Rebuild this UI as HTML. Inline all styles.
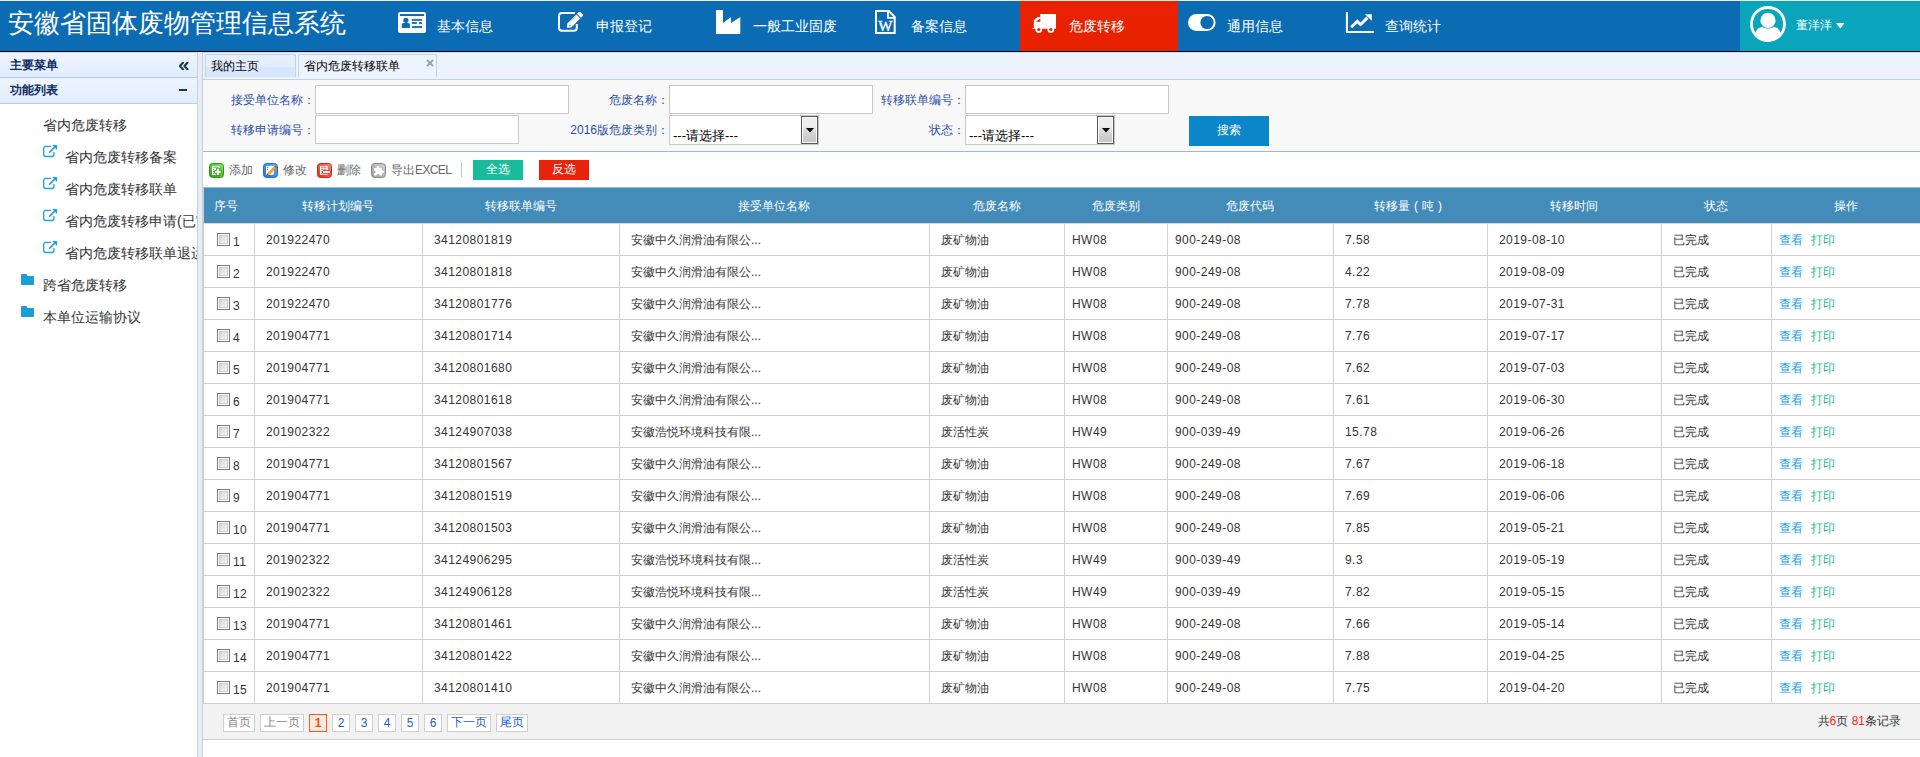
<!DOCTYPE html>
<html><head><meta charset="utf-8"><title>安徽省固体废物管理信息系统</title><style>
*{margin:0;padding:0}
html,body{width:1920px;height:757px;overflow:hidden;background:#fff;font-family:"Liberation Sans",sans-serif;position:relative}
.t{position:absolute;white-space:nowrap}
.b{position:absolute;display:block}
.cb{position:absolute;width:13px;height:13px;box-sizing:border-box;border:1px solid #7a7a7a;background:#fff}
.cb:after{content:"";position:absolute;left:1px;top:1px;width:9px;height:9px;box-sizing:border-box;border:1px solid #c8ccd3;background:linear-gradient(135deg,#d0d4db,#f7f7f7)}
</style></head><body>
<div class="b" style="left:0px;top:0px;width:1920px;height:1px;background:#f3ede9"></div>
<div class="b" style="left:0px;top:1px;width:1920px;height:50px;background:#0c6cb3"></div>
<div class="b" style="left:0px;top:51px;width:1920px;height:1px;background:#000"></div>
<div class="b" style="left:1020px;top:1px;width:158px;height:50px;background:#e82100"></div>
<div class="b" style="left:1740px;top:1px;width:180px;height:50px;background:#0aa4bd"></div>
<div class="t " style="left:8px;top:10px;font-size:26px;line-height:26px;color:#fff;">安徽省固体废物管理信息系统</div>
<div class="t " style="left:437px;top:19px;font-size:14px;line-height:14px;color:#fff;">基本信息</div>
<div class="t " style="left:596px;top:19px;font-size:14px;line-height:14px;color:#fff;">申报登记</div>
<div class="t " style="left:753px;top:19px;font-size:14px;line-height:14px;color:#fff;">一般工业固废</div>
<div class="t " style="left:911px;top:19px;font-size:14px;line-height:14px;color:#fff;">备案信息</div>
<div class="t " style="left:1069px;top:19px;font-size:14px;line-height:14px;color:#fff;">危废转移</div>
<div class="t " style="left:1227px;top:19px;font-size:14px;line-height:14px;color:#fff;">通用信息</div>
<div class="t " style="left:1385px;top:19px;font-size:14px;line-height:14px;color:#fff;">查询统计</div>
<svg class="b" style="left:398px;top:12px" width="28" height="21" viewBox="0 0 28 21">
<rect x="0" y="0" width="28" height="21" rx="2" fill="#fff"/>
<rect x="2" y="2" width="24" height="2" fill="#0c6cb3"/>
<circle cx="7.9" cy="8.3" r="2.6" fill="#0c6cb3"/>
<path d="M3.8 16 V12.6 Q3.8 11 5.4 11 H10.3 Q11.9 11 11.9 12.6 V16 Z" fill="#0c6cb3"/>
<rect x="13.8" y="7.1" width="10.2" height="1.7" fill="#0c6cb3"/>
<rect x="13.8" y="10.1" width="5" height="1.8" fill="#0c6cb3"/>
<rect x="20.9" y="10.1" width="3.1" height="1.8" fill="#0c6cb3"/>
<rect x="13.8" y="14.1" width="10.2" height="1.8" fill="#0c6cb3"/>
</svg>
<svg class="b" style="left:558px;top:12px" width="25" height="20" viewBox="0 0 25 20">
<path d="M16.8 1 H4 Q1 1 1 4 V15.8 Q1 18.8 4 18.8 H15.8 Q18.8 18.8 18.8 15.8 V11.9" fill="none" stroke="#fff" stroke-width="2"/>
<path d="M9 15.8 L9.28 11.56 L18.33 2.51 L22.29 6.47 L13.24 15.52 Z" fill="#fff"/>
<path d="M19.04 1.8 L21.02 -0.18 Q21.7 -0.6 22.4 0 L24.98 2.58 Q25.4 3.2 24.98 3.78 L23 5.76 Z" fill="#fff"/>
<path d="M11.6 13.2 L12.3 13.9" stroke="#0c6cb3" stroke-width="1.2"/>
<path d="M12.8 9.2 L17.5 4.5" stroke="#0c6cb3" stroke-width="0.6" opacity="0.6"/>
</svg>
<svg class="b" style="left:716px;top:10px" width="25" height="25" viewBox="0 0 25 25">
<path d="M0 0.8 Q0 0 0.8 0 H6.2 Q7 0 7 0.8 V13 L15 7 V13 L24.3 7 V24 H0 Z" fill="#fff"/>
</svg>
<svg class="b" style="left:875px;top:10px" width="22" height="25" viewBox="0 0 22 25">
<path d="M1 1 H13.8 L19.7 7 V23 H1 Z" fill="none" stroke="#fff" stroke-width="2"/>
<path d="M13 1 V7.8 H19.7" fill="none" stroke="#fff" stroke-width="1.8"/>
<text x="10.4" y="20.8" font-family="Liberation Serif" font-size="15" fill="#fff" text-anchor="middle" font-weight="normal" stroke="#fff" stroke-width="0.35">W</text>
</svg>
<svg class="b" style="left:1032px;top:13px" width="25" height="21" viewBox="0 0 25 21">
<path d="M8.3 1 H24 V15.7 H0.4 V14.9 H1.8 V7.3 L5.6 4 H8.3 Z" fill="#fff"/>
<path d="M3.7 8.7 L8.3 5.6 V8.7 Z" fill="#e82100"/>
<circle cx="6.8" cy="16.5" r="3.4" fill="#fff"/><circle cx="6.8" cy="16.5" r="1.6" fill="#e82100"/>
<circle cx="18.8" cy="16.5" r="3.4" fill="#fff"/><circle cx="18.8" cy="16.5" r="1.6" fill="#e82100"/>
</svg>
<svg class="b" style="left:1188px;top:14px" width="28" height="17" viewBox="0 0 28 17">
<rect x="0" y="0" width="27.6" height="17" rx="8.5" fill="#fff"/>
<circle cx="19" cy="8.5" r="6.6" fill="#0c6cb3"/>
</svg>
<svg class="b" style="left:1345px;top:12px" width="30" height="22" viewBox="0 0 30 22">
<path d="M1.9 0 V19.9 H28.8" fill="none" stroke="#fff" stroke-width="2"/>
<path d="M6.2 15.3 L12.3 9.3 L15.6 12.5 L22.5 5.6" fill="none" stroke="#fff" stroke-width="3"/>
<path d="M20 2.2 H26.8 V8.8 Z" fill="#fff"/>
</svg>
<svg class="b" style="left:1750px;top:6px" width="36" height="36" viewBox="0 0 36 36">
<defs><clipPath id="uc"><circle cx="18" cy="18" r="16"/></clipPath></defs>
<circle cx="18" cy="18" r="16.5" fill="none" stroke="#fff" stroke-width="2.8"/>
<g clip-path="url(#uc)"><path d="M5.2 36 V29 Q6 21.5 12 21 Q18 23.5 24 21 Q30 21.5 30.8 29 V36 Z" fill="#fff"/></g>
<circle cx="18" cy="14.4" r="8.2" fill="#0aa4bd"/>
<circle cx="18" cy="14.4" r="7.6" fill="#fff"/>
</svg>
<div class="t " style="left:1796px;top:19px;font-size:12px;line-height:12px;color:#fff;">董洋洋</div>
<svg class="b" style="left:1836px;top:23px" width="9" height="6" viewBox="0 0 9 6"><path d="M0 0 H8.5 L4.25 5.5 Z" fill="#fff"/></svg>
<div class="b" style="left:0px;top:52px;width:197px;height:25px;background:linear-gradient(#eff5ff,#e0ecff)"></div>
<div class="b" style="left:0px;top:52px;width:197px;height:1px;background:#c6daf4"></div>
<div class="b" style="left:0px;top:77px;width:197px;height:1px;background:#b4cdee"></div>
<div class="b" style="left:0px;top:78px;width:197px;height:25px;background:linear-gradient(#eff5ff,#e0ecff)"></div>
<div class="b" style="left:0px;top:103px;width:197px;height:1px;background:#b4cdee"></div>
<div class="b" style="left:197px;top:52px;width:1px;height:705px;background:#bcd2f0"></div>
<div class="b" style="left:198px;top:52px;width:4px;height:705px;background:#e9ecf1"></div>
<div class="t " style="left:10px;top:59px;font-size:12px;line-height:12px;color:#0e2d5f;font-weight:bold">主要菜单</div>
<div class="t " style="left:10px;top:84px;font-size:12px;line-height:12px;color:#0e2d5f;font-weight:bold">功能列表</div>
<svg class="b" style="left:179px;top:62px" width="10" height="8" viewBox="0 0 10 8"><path d="M4.5 0 L1 4 L4.5 8 M9 0 L5.5 4 L9 8" fill="none" stroke="#163c4c" stroke-width="2.2"/></svg>
<div class="b" style="left:179px;top:89px;width:8px;height:2px;background:#163c4c"></div>
<div class="t " style="left:43px;top:118px;font-size:14px;line-height:14px;color:#333;">省内危废转移</div>
<svg class="b" style="left:43px;top:145px" width="15" height="13" viewBox="0 0 15 13"><path d="M8 1.4 H2.6 Q0.7 1.4 0.7 3.3 V9.6 Q0.7 11.5 2.6 11.5 H9 Q10.9 11.5 10.9 9.6 V7" fill="none" stroke="#1e9fe0" stroke-width="1.3"/><path d="M6.2 7.6 L11.8 2" stroke="#1e9fe0" stroke-width="1.6"/><path d="M9.1 0 H14.1 V4.9 Z" fill="#1e9fe0"/></svg>
<div class="t " style="left:65px;top:150px;font-size:14px;line-height:14px;color:#333;white-space:nowrap;width:132px;overflow:hidden;height:16px">省内危废转移备案</div>
<svg class="b" style="left:43px;top:177px" width="15" height="13" viewBox="0 0 15 13"><path d="M8 1.4 H2.6 Q0.7 1.4 0.7 3.3 V9.6 Q0.7 11.5 2.6 11.5 H9 Q10.9 11.5 10.9 9.6 V7" fill="none" stroke="#1e9fe0" stroke-width="1.3"/><path d="M6.2 7.6 L11.8 2" stroke="#1e9fe0" stroke-width="1.6"/><path d="M9.1 0 H14.1 V4.9 Z" fill="#1e9fe0"/></svg>
<div class="t " style="left:65px;top:182px;font-size:14px;line-height:14px;color:#333;white-space:nowrap;width:132px;overflow:hidden;height:16px">省内危废转移联单</div>
<svg class="b" style="left:43px;top:209px" width="15" height="13" viewBox="0 0 15 13"><path d="M8 1.4 H2.6 Q0.7 1.4 0.7 3.3 V9.6 Q0.7 11.5 2.6 11.5 H9 Q10.9 11.5 10.9 9.6 V7" fill="none" stroke="#1e9fe0" stroke-width="1.3"/><path d="M6.2 7.6 L11.8 2" stroke="#1e9fe0" stroke-width="1.6"/><path d="M9.1 0 H14.1 V4.9 Z" fill="#1e9fe0"/></svg>
<div class="t " style="left:65px;top:214px;font-size:14px;line-height:14px;color:#333;white-space:nowrap;width:132px;overflow:hidden;height:16px">省内危废转移申请(已审核)</div>
<svg class="b" style="left:43px;top:241px" width="15" height="13" viewBox="0 0 15 13"><path d="M8 1.4 H2.6 Q0.7 1.4 0.7 3.3 V9.6 Q0.7 11.5 2.6 11.5 H9 Q10.9 11.5 10.9 9.6 V7" fill="none" stroke="#1e9fe0" stroke-width="1.3"/><path d="M6.2 7.6 L11.8 2" stroke="#1e9fe0" stroke-width="1.6"/><path d="M9.1 0 H14.1 V4.9 Z" fill="#1e9fe0"/></svg>
<div class="t " style="left:65px;top:246px;font-size:14px;line-height:14px;color:#333;white-space:nowrap;width:132px;overflow:hidden;height:16px">省内危废转移联单退运</div>
<svg class="b" style="left:21px;top:274px" width="13" height="11" viewBox="0 0 13 11"><path d="M0 1 Q0 0 1 0 H5.5 L6.5 2 H12 Q13 2 13 3 V10 Q13 11 12 11 H1 Q0 11 0 10 Z" fill="#1b9ede"/></svg>
<div class="t " style="left:43px;top:278px;font-size:14px;line-height:14px;color:#333;">跨省危废转移</div>
<svg class="b" style="left:21px;top:306px" width="13" height="11" viewBox="0 0 13 11"><path d="M0 1 Q0 0 1 0 H5.5 L6.5 2 H12 Q13 2 13 3 V10 Q13 11 12 11 H1 Q0 11 0 10 Z" fill="#1b9ede"/></svg>
<div class="t " style="left:43px;top:310px;font-size:14px;line-height:14px;color:#333;">本单位运输协议</div>
<div class="b" style="left:202px;top:52px;width:1px;height:705px;background:#bcd2f0"></div>
<div class="b" style="left:203px;top:52px;width:1717px;height:27px;background:#ecf3fd"></div>
<div class="b" style="left:203px;top:52px;width:1717px;height:1px;background:#c6daf4"></div>
<div class="b" style="left:203px;top:79px;width:1717px;height:1px;background:#bcd2f0"></div>
<div class="b" style="left:205px;top:54px;width:91px;height:23px;border:1px solid #bcd2f0;border-bottom:0;box-sizing:border-box;border-radius:2px 2px 0 0;background:linear-gradient(#e8f0fd 0,#e3ecfc 55%,#d7e6fb 56%,#d7e6fb 100%)"></div>
<div class="t " style="left:211px;top:60px;font-size:12px;line-height:12px;color:#000;">我的主页</div>
<div class="b" style="left:298px;top:54px;width:139px;height:23px;border:1px solid #bcd2f0;border-bottom:0;box-sizing:border-box;border-radius:2px 2px 0 0;background:#eef4fd"></div>
<div class="t " style="left:304px;top:60px;font-size:12px;line-height:12px;color:#000;">省内危废转移联单</div>
<svg class="b" style="left:426px;top:59px" width="8" height="8" viewBox="0 0 8 8"><path d="M1 1 L7 7 M7 1 L1 7" stroke="#8aa8a8" stroke-width="1.8"/></svg>
<div class="b" style="left:203px;top:80px;width:1717px;height:71px;background:#f8f8f8"></div>
<div class="b" style="left:203px;top:151px;width:1717px;height:1px;background:#95b8e7"></div>
<div class="t" style="left:115px;width:200px;text-align:right;top:94px;font-size:12px;line-height:12px;color:#2f4fa6">接受单位名称：</div>
<div class="t" style="left:115px;width:200px;text-align:right;top:124px;font-size:12px;line-height:12px;color:#2f4fa6">转移申请编号：</div>
<div class="t" style="left:469px;width:200px;text-align:right;top:94px;font-size:12px;line-height:12px;color:#2f4fa6">危废名称：</div>
<div class="t" style="left:469px;width:200px;text-align:right;top:124px;font-size:12px;line-height:12px;color:#2f4fa6">2016版危废类别：</div>
<div class="t" style="left:765px;width:200px;text-align:right;top:94px;font-size:12px;line-height:12px;color:#2f4fa6">转移联单编号：</div>
<div class="t" style="left:765px;width:200px;text-align:right;top:124px;font-size:12px;line-height:12px;color:#2f4fa6">状态：</div>
<div class="b" style="left:315px;top:85px;width:254px;height:29px;background:#fff;border:1px solid #c9c9c9;box-sizing:border-box"></div>
<div class="b" style="left:315px;top:115px;width:204px;height:29px;background:#fff;border:1px solid #c9c9c9;box-sizing:border-box"></div>
<div class="b" style="left:669px;top:85px;width:204px;height:29px;background:#fff;border:1px solid #c9c9c9;box-sizing:border-box"></div>
<div class="b" style="left:965px;top:85px;width:204px;height:29px;background:#fff;border:1px solid #c9c9c9;box-sizing:border-box"></div>
<div class="b" style="left:669px;top:115px;width:150px;height:30px;background:#fff;border:1px solid #c9c9c9;box-sizing:border-box"></div>
<div class="b" style="left:801px;top:116px;width:17px;height:28px;border:1px solid #5a5a5a;box-sizing:border-box;background:linear-gradient(#ececec,#f0f0f0 30%,#d6d6d6 60%,#c4c4c4);box-shadow:inset 0 0 0 1px #fafafa"></div>
<svg class="b" style="left:806px;top:128px" width="8" height="5" viewBox="0 0 8 5"><path d="M0 0 H8 L4 4.5 Z" fill="#000"/></svg>
<div class="t " style="left:673px;top:129px;font-size:13px;line-height:13px;color:#000;">---请选择---</div>
<div class="b" style="left:965px;top:115px;width:150px;height:30px;background:#fff;border:1px solid #c9c9c9;box-sizing:border-box"></div>
<div class="b" style="left:1097px;top:116px;width:17px;height:28px;border:1px solid #5a5a5a;box-sizing:border-box;background:linear-gradient(#ececec,#f0f0f0 30%,#d6d6d6 60%,#c4c4c4);box-shadow:inset 0 0 0 1px #fafafa"></div>
<svg class="b" style="left:1102px;top:128px" width="8" height="5" viewBox="0 0 8 5"><path d="M0 0 H8 L4 4.5 Z" fill="#000"/></svg>
<div class="t " style="left:969px;top:129px;font-size:13px;line-height:13px;color:#000;">---请选择---</div>
<div class="b" style="left:1189px;top:116px;width:80px;height:30px;background:#0b86c8"></div>
<div class="t " style="left:1189px;top:124px;font-size:12px;line-height:12px;color:#fff;width:80px;text-align:center">搜索</div>
<div class="b" style="left:203px;top:152px;width:1717px;height:35px;background:#fff"></div>
<div class="b" style="left:203px;top:187px;width:1717px;height:1px;background:#95b8e7"></div>
<svg class="b" style="left:209px;top:163px" width="15" height="15" viewBox="0 0 15 15"><defs><linearGradient id="gg" x1="1" y1="0" x2="0" y2="1"><stop offset="0" stop-color="#86e862"/><stop offset="1" stop-color="#2fa012"/></linearGradient></defs><rect x="0.5" y="0.5" width="14" height="14" rx="3" fill="url(#gg)" stroke="#2b9812"/><rect x="3" y="3" width="7.7" height="8.8" fill="#fff"/><path d="M4 4.3 H9.5 M4 6.4 H5 M4 8.4 H5 M4 10.4 H5" stroke="#777" stroke-width="0.8"/><path d="M7.6 5.2 H10.4 V7.6 H12.6 V10.4 H10.4 V12.6 H7.6 V10.4 H5.4 V7.6 H7.6 Z" fill="#fff" stroke="#2b9812" stroke-width="0.9"/></svg>
<svg class="b" style="left:263px;top:163px" width="15" height="15" viewBox="0 0 15 15"><defs><linearGradient id="gb" x1="1" y1="0" x2="0" y2="1"><stop offset="0" stop-color="#6ab4f8"/><stop offset="1" stop-color="#1f72d8"/></linearGradient></defs><rect x="0.5" y="0.5" width="14" height="14" rx="3" fill="url(#gb)" stroke="#1f6fd0"/><rect x="3" y="3" width="7.8" height="8.8" fill="#fff"/><path d="M4 4.3 H5.5 M4 6.4 H5" stroke="#666" stroke-width="0.8"/><path d="M10.2 12 H12" stroke="#666" stroke-width="0.6"/><path d="M12.3 2.8 L13.6 4.1 L6.3 11.4 L3.9 12.2 L4.7 9.9 Z" fill="#f3a90f" stroke="#d08000" stroke-width="0.5"/><path d="M12.3 2.4 L14.1 4.2 L13.1 5.2 L11.3 3.4 Z" fill="#e94040"/><path d="M3.9 12.2 L4.3 10.9 L5.2 11.8 Z" fill="#102040"/></svg>
<svg class="b" style="left:317px;top:163px" width="15" height="15" viewBox="0 0 15 15"><defs><linearGradient id="gr" x1="1" y1="0" x2="0" y2="1"><stop offset="0" stop-color="#fb8a70"/><stop offset="1" stop-color="#d8301e"/></linearGradient></defs><rect x="0.5" y="0.5" width="14" height="14" rx="3" fill="url(#gr)" stroke="#d0281a"/><rect x="3" y="3" width="7.8" height="8.8" fill="#fff"/><path d="M4 4.3 H9.5 M4 6.2 H9.5 M4 8.3 H5 M4 10.3 H5" stroke="#d0504a" stroke-width="0.8"/><rect x="5.5" y="7.6" width="7.8" height="3" rx="0.6" fill="#fff" stroke="#d0281a" stroke-width="0.9"/></svg>
<svg class="b" style="left:371px;top:163px" width="15" height="15" viewBox="0 0 15 15"><defs><linearGradient id="gy" x1="1" y1="0" x2="0" y2="1"><stop offset="0" stop-color="#d0d0d0"/><stop offset="1" stop-color="#a0a0a0"/></linearGradient></defs><rect x="0.5" y="0.5" width="14" height="14" rx="3" fill="url(#gy)" stroke="#8a8a8a"/><path d="M3 5 H5.6 Q5.2 3.2 7 3 Q8.8 3.2 8.4 5 H11 V7.4 Q12.9 7 13 8.9 Q12.9 10.7 11 10.3 V12.5 H8.4 Q8.8 10.9 7 11 Q5.2 10.9 5.6 12.5 H3 V10.3 Q4.6 10.6 4.6 9 Q4.6 7.4 3 7.7 Z" fill="#fff"/></svg>
<div class="t " style="left:229px;top:164px;font-size:12px;line-height:12px;color:#666;">添加</div>
<div class="t " style="left:283px;top:164px;font-size:12px;line-height:12px;color:#666;">修改</div>
<div class="t " style="left:337px;top:164px;font-size:12px;line-height:12px;color:#666;">删除</div>
<div class="t " style="left:391px;top:164px;font-size:12px;line-height:12px;color:#666;">导出<span style="letter-spacing:-0.6px">EXCEL</span></div>
<div class="b" style="left:461px;top:162px;width:1px;height:15px;background:#b8c8d8"></div>
<div class="b" style="left:473px;top:160px;width:50px;height:20px;background:#1abb9b"></div>
<div class="t " style="left:473px;top:163px;font-size:12px;line-height:12px;color:#fff;width:50px;text-align:center">全选</div>
<div class="b" style="left:539px;top:160px;width:50px;height:20px;background:#e8230c"></div>
<div class="t " style="left:539px;top:163px;font-size:12px;line-height:12px;color:#fff;width:50px;text-align:center">反选</div>
<div class="b" style="left:204px;top:188px;width:1716px;height:35px;background:#438cb9"></div>
<div class="b" style="left:203px;top:188px;width:1px;height:35px;background:#cfcfcf"></div>
<div class="b" style="left:203px;top:223px;width:1717px;height:1px;background:#d8d8d8"></div>
<div class="t " style="left:214px;top:200px;font-size:12px;line-height:12px;color:#fff;">序号</div>
<div class="t" style="left:254px;width:168px;text-align:center;top:200px;font-size:12px;line-height:12px;color:#fff">转移计划编号</div>
<div class="t" style="left:422px;width:197px;text-align:center;top:200px;font-size:12px;line-height:12px;color:#fff">转移联单编号</div>
<div class="t" style="left:619px;width:310px;text-align:center;top:200px;font-size:12px;line-height:12px;color:#fff">接受单位名称</div>
<div class="t" style="left:929px;width:135px;text-align:center;top:200px;font-size:12px;line-height:12px;color:#fff">危废名称</div>
<div class="t" style="left:1064px;width:103px;text-align:center;top:200px;font-size:12px;line-height:12px;color:#fff">危废类别</div>
<div class="t" style="left:1167px;width:166px;text-align:center;top:200px;font-size:12px;line-height:12px;color:#fff">危废代码</div>
<div class="t" style="left:1333px;width:154px;text-align:center;top:200px;font-size:12px;line-height:12px;color:#fff">转移量<span style="display:inline-block;width:12px;text-align:center">(</span>吨<span style="display:inline-block;width:12px;text-align:center">)</span></div>
<div class="t" style="left:1487px;width:174px;text-align:center;top:200px;font-size:12px;line-height:12px;color:#fff">转移时间</div>
<div class="t" style="left:1661px;width:110px;text-align:center;top:200px;font-size:12px;line-height:12px;color:#fff">状态</div>
<div class="t" style="left:1771px;width:149px;text-align:center;top:200px;font-size:12px;line-height:12px;color:#fff">操作</div>
<div class="b" style="left:203px;top:224px;width:1717px;height:480px;background:#fff"></div>
<div class="b" style="left:203px;top:223px;width:1px;height:481px;background:#cfcfcf"></div>
<div class="b" style="left:203px;top:255px;width:1717px;height:1px;background:#d0d0d0"></div>
<div class="cb" style="left:217px;top:233px"></div>
<div class="t " style="left:233px;top:236px;font-size:12px;line-height:12px;color:#333;letter-spacing:0.4px">1</div>
<div class="t " style="left:266px;top:234px;font-size:12px;line-height:12px;color:#333;letter-spacing:0.45px">201922470</div>
<div class="t " style="left:434px;top:234px;font-size:12px;line-height:12px;color:#333;letter-spacing:0.45px">34120801819</div>
<div class="t " style="left:631px;top:234px;font-size:12px;line-height:12px;color:#333;">安徽中久润滑油有限公...</div>
<div class="t " style="left:941px;top:234px;font-size:12px;line-height:12px;color:#333;">废矿物油</div>
<div class="t " style="left:1072px;top:234px;font-size:12px;line-height:12px;color:#333;letter-spacing:0.45px">HW08</div>
<div class="t " style="left:1175px;top:234px;font-size:12px;line-height:12px;color:#333;letter-spacing:0.45px">900-249-08</div>
<div class="t " style="left:1345px;top:234px;font-size:12px;line-height:12px;color:#333;letter-spacing:0.45px">7.58</div>
<div class="t " style="left:1499px;top:234px;font-size:12px;line-height:12px;color:#333;letter-spacing:0.45px">2019-08-10</div>
<div class="t " style="left:1673px;top:234px;font-size:12px;line-height:12px;color:#333;">已完成</div>
<div class="t " style="left:1779px;top:234px;font-size:12px;line-height:12px;color:#0d9fe6;">查看</div>
<div class="t " style="left:1811px;top:234px;font-size:12px;line-height:12px;color:#18bb95;">打印</div>
<div class="b" style="left:203px;top:287px;width:1717px;height:1px;background:#d0d0d0"></div>
<div class="cb" style="left:217px;top:265px"></div>
<div class="t " style="left:233px;top:268px;font-size:12px;line-height:12px;color:#333;letter-spacing:0.4px">2</div>
<div class="t " style="left:266px;top:266px;font-size:12px;line-height:12px;color:#333;letter-spacing:0.45px">201922470</div>
<div class="t " style="left:434px;top:266px;font-size:12px;line-height:12px;color:#333;letter-spacing:0.45px">34120801818</div>
<div class="t " style="left:631px;top:266px;font-size:12px;line-height:12px;color:#333;">安徽中久润滑油有限公...</div>
<div class="t " style="left:941px;top:266px;font-size:12px;line-height:12px;color:#333;">废矿物油</div>
<div class="t " style="left:1072px;top:266px;font-size:12px;line-height:12px;color:#333;letter-spacing:0.45px">HW08</div>
<div class="t " style="left:1175px;top:266px;font-size:12px;line-height:12px;color:#333;letter-spacing:0.45px">900-249-08</div>
<div class="t " style="left:1345px;top:266px;font-size:12px;line-height:12px;color:#333;letter-spacing:0.45px">4.22</div>
<div class="t " style="left:1499px;top:266px;font-size:12px;line-height:12px;color:#333;letter-spacing:0.45px">2019-08-09</div>
<div class="t " style="left:1673px;top:266px;font-size:12px;line-height:12px;color:#333;">已完成</div>
<div class="t " style="left:1779px;top:266px;font-size:12px;line-height:12px;color:#0d9fe6;">查看</div>
<div class="t " style="left:1811px;top:266px;font-size:12px;line-height:12px;color:#18bb95;">打印</div>
<div class="b" style="left:203px;top:319px;width:1717px;height:1px;background:#d0d0d0"></div>
<div class="cb" style="left:217px;top:297px"></div>
<div class="t " style="left:233px;top:300px;font-size:12px;line-height:12px;color:#333;letter-spacing:0.4px">3</div>
<div class="t " style="left:266px;top:298px;font-size:12px;line-height:12px;color:#333;letter-spacing:0.45px">201922470</div>
<div class="t " style="left:434px;top:298px;font-size:12px;line-height:12px;color:#333;letter-spacing:0.45px">34120801776</div>
<div class="t " style="left:631px;top:298px;font-size:12px;line-height:12px;color:#333;">安徽中久润滑油有限公...</div>
<div class="t " style="left:941px;top:298px;font-size:12px;line-height:12px;color:#333;">废矿物油</div>
<div class="t " style="left:1072px;top:298px;font-size:12px;line-height:12px;color:#333;letter-spacing:0.45px">HW08</div>
<div class="t " style="left:1175px;top:298px;font-size:12px;line-height:12px;color:#333;letter-spacing:0.45px">900-249-08</div>
<div class="t " style="left:1345px;top:298px;font-size:12px;line-height:12px;color:#333;letter-spacing:0.45px">7.78</div>
<div class="t " style="left:1499px;top:298px;font-size:12px;line-height:12px;color:#333;letter-spacing:0.45px">2019-07-31</div>
<div class="t " style="left:1673px;top:298px;font-size:12px;line-height:12px;color:#333;">已完成</div>
<div class="t " style="left:1779px;top:298px;font-size:12px;line-height:12px;color:#0d9fe6;">查看</div>
<div class="t " style="left:1811px;top:298px;font-size:12px;line-height:12px;color:#18bb95;">打印</div>
<div class="b" style="left:203px;top:351px;width:1717px;height:1px;background:#d0d0d0"></div>
<div class="cb" style="left:217px;top:329px"></div>
<div class="t " style="left:233px;top:332px;font-size:12px;line-height:12px;color:#333;letter-spacing:0.4px">4</div>
<div class="t " style="left:266px;top:330px;font-size:12px;line-height:12px;color:#333;letter-spacing:0.45px">201904771</div>
<div class="t " style="left:434px;top:330px;font-size:12px;line-height:12px;color:#333;letter-spacing:0.45px">34120801714</div>
<div class="t " style="left:631px;top:330px;font-size:12px;line-height:12px;color:#333;">安徽中久润滑油有限公...</div>
<div class="t " style="left:941px;top:330px;font-size:12px;line-height:12px;color:#333;">废矿物油</div>
<div class="t " style="left:1072px;top:330px;font-size:12px;line-height:12px;color:#333;letter-spacing:0.45px">HW08</div>
<div class="t " style="left:1175px;top:330px;font-size:12px;line-height:12px;color:#333;letter-spacing:0.45px">900-249-08</div>
<div class="t " style="left:1345px;top:330px;font-size:12px;line-height:12px;color:#333;letter-spacing:0.45px">7.76</div>
<div class="t " style="left:1499px;top:330px;font-size:12px;line-height:12px;color:#333;letter-spacing:0.45px">2019-07-17</div>
<div class="t " style="left:1673px;top:330px;font-size:12px;line-height:12px;color:#333;">已完成</div>
<div class="t " style="left:1779px;top:330px;font-size:12px;line-height:12px;color:#0d9fe6;">查看</div>
<div class="t " style="left:1811px;top:330px;font-size:12px;line-height:12px;color:#18bb95;">打印</div>
<div class="b" style="left:203px;top:383px;width:1717px;height:1px;background:#d0d0d0"></div>
<div class="cb" style="left:217px;top:361px"></div>
<div class="t " style="left:233px;top:364px;font-size:12px;line-height:12px;color:#333;letter-spacing:0.4px">5</div>
<div class="t " style="left:266px;top:362px;font-size:12px;line-height:12px;color:#333;letter-spacing:0.45px">201904771</div>
<div class="t " style="left:434px;top:362px;font-size:12px;line-height:12px;color:#333;letter-spacing:0.45px">34120801680</div>
<div class="t " style="left:631px;top:362px;font-size:12px;line-height:12px;color:#333;">安徽中久润滑油有限公...</div>
<div class="t " style="left:941px;top:362px;font-size:12px;line-height:12px;color:#333;">废矿物油</div>
<div class="t " style="left:1072px;top:362px;font-size:12px;line-height:12px;color:#333;letter-spacing:0.45px">HW08</div>
<div class="t " style="left:1175px;top:362px;font-size:12px;line-height:12px;color:#333;letter-spacing:0.45px">900-249-08</div>
<div class="t " style="left:1345px;top:362px;font-size:12px;line-height:12px;color:#333;letter-spacing:0.45px">7.62</div>
<div class="t " style="left:1499px;top:362px;font-size:12px;line-height:12px;color:#333;letter-spacing:0.45px">2019-07-03</div>
<div class="t " style="left:1673px;top:362px;font-size:12px;line-height:12px;color:#333;">已完成</div>
<div class="t " style="left:1779px;top:362px;font-size:12px;line-height:12px;color:#0d9fe6;">查看</div>
<div class="t " style="left:1811px;top:362px;font-size:12px;line-height:12px;color:#18bb95;">打印</div>
<div class="b" style="left:203px;top:415px;width:1717px;height:1px;background:#d0d0d0"></div>
<div class="cb" style="left:217px;top:393px"></div>
<div class="t " style="left:233px;top:396px;font-size:12px;line-height:12px;color:#333;letter-spacing:0.4px">6</div>
<div class="t " style="left:266px;top:394px;font-size:12px;line-height:12px;color:#333;letter-spacing:0.45px">201904771</div>
<div class="t " style="left:434px;top:394px;font-size:12px;line-height:12px;color:#333;letter-spacing:0.45px">34120801618</div>
<div class="t " style="left:631px;top:394px;font-size:12px;line-height:12px;color:#333;">安徽中久润滑油有限公...</div>
<div class="t " style="left:941px;top:394px;font-size:12px;line-height:12px;color:#333;">废矿物油</div>
<div class="t " style="left:1072px;top:394px;font-size:12px;line-height:12px;color:#333;letter-spacing:0.45px">HW08</div>
<div class="t " style="left:1175px;top:394px;font-size:12px;line-height:12px;color:#333;letter-spacing:0.45px">900-249-08</div>
<div class="t " style="left:1345px;top:394px;font-size:12px;line-height:12px;color:#333;letter-spacing:0.45px">7.61</div>
<div class="t " style="left:1499px;top:394px;font-size:12px;line-height:12px;color:#333;letter-spacing:0.45px">2019-06-30</div>
<div class="t " style="left:1673px;top:394px;font-size:12px;line-height:12px;color:#333;">已完成</div>
<div class="t " style="left:1779px;top:394px;font-size:12px;line-height:12px;color:#0d9fe6;">查看</div>
<div class="t " style="left:1811px;top:394px;font-size:12px;line-height:12px;color:#18bb95;">打印</div>
<div class="b" style="left:203px;top:447px;width:1717px;height:1px;background:#d0d0d0"></div>
<div class="cb" style="left:217px;top:425px"></div>
<div class="t " style="left:233px;top:428px;font-size:12px;line-height:12px;color:#333;letter-spacing:0.4px">7</div>
<div class="t " style="left:266px;top:426px;font-size:12px;line-height:12px;color:#333;letter-spacing:0.45px">201902322</div>
<div class="t " style="left:434px;top:426px;font-size:12px;line-height:12px;color:#333;letter-spacing:0.45px">34124907038</div>
<div class="t " style="left:631px;top:426px;font-size:12px;line-height:12px;color:#333;">安徽浩悦环境科技有限...</div>
<div class="t " style="left:941px;top:426px;font-size:12px;line-height:12px;color:#333;">废活性炭</div>
<div class="t " style="left:1072px;top:426px;font-size:12px;line-height:12px;color:#333;letter-spacing:0.45px">HW49</div>
<div class="t " style="left:1175px;top:426px;font-size:12px;line-height:12px;color:#333;letter-spacing:0.45px">900-039-49</div>
<div class="t " style="left:1345px;top:426px;font-size:12px;line-height:12px;color:#333;letter-spacing:0.45px">15.78</div>
<div class="t " style="left:1499px;top:426px;font-size:12px;line-height:12px;color:#333;letter-spacing:0.45px">2019-06-26</div>
<div class="t " style="left:1673px;top:426px;font-size:12px;line-height:12px;color:#333;">已完成</div>
<div class="t " style="left:1779px;top:426px;font-size:12px;line-height:12px;color:#0d9fe6;">查看</div>
<div class="t " style="left:1811px;top:426px;font-size:12px;line-height:12px;color:#18bb95;">打印</div>
<div class="b" style="left:203px;top:479px;width:1717px;height:1px;background:#d0d0d0"></div>
<div class="cb" style="left:217px;top:457px"></div>
<div class="t " style="left:233px;top:460px;font-size:12px;line-height:12px;color:#333;letter-spacing:0.4px">8</div>
<div class="t " style="left:266px;top:458px;font-size:12px;line-height:12px;color:#333;letter-spacing:0.45px">201904771</div>
<div class="t " style="left:434px;top:458px;font-size:12px;line-height:12px;color:#333;letter-spacing:0.45px">34120801567</div>
<div class="t " style="left:631px;top:458px;font-size:12px;line-height:12px;color:#333;">安徽中久润滑油有限公...</div>
<div class="t " style="left:941px;top:458px;font-size:12px;line-height:12px;color:#333;">废矿物油</div>
<div class="t " style="left:1072px;top:458px;font-size:12px;line-height:12px;color:#333;letter-spacing:0.45px">HW08</div>
<div class="t " style="left:1175px;top:458px;font-size:12px;line-height:12px;color:#333;letter-spacing:0.45px">900-249-08</div>
<div class="t " style="left:1345px;top:458px;font-size:12px;line-height:12px;color:#333;letter-spacing:0.45px">7.67</div>
<div class="t " style="left:1499px;top:458px;font-size:12px;line-height:12px;color:#333;letter-spacing:0.45px">2019-06-18</div>
<div class="t " style="left:1673px;top:458px;font-size:12px;line-height:12px;color:#333;">已完成</div>
<div class="t " style="left:1779px;top:458px;font-size:12px;line-height:12px;color:#0d9fe6;">查看</div>
<div class="t " style="left:1811px;top:458px;font-size:12px;line-height:12px;color:#18bb95;">打印</div>
<div class="b" style="left:203px;top:511px;width:1717px;height:1px;background:#d0d0d0"></div>
<div class="cb" style="left:217px;top:489px"></div>
<div class="t " style="left:233px;top:492px;font-size:12px;line-height:12px;color:#333;letter-spacing:0.4px">9</div>
<div class="t " style="left:266px;top:490px;font-size:12px;line-height:12px;color:#333;letter-spacing:0.45px">201904771</div>
<div class="t " style="left:434px;top:490px;font-size:12px;line-height:12px;color:#333;letter-spacing:0.45px">34120801519</div>
<div class="t " style="left:631px;top:490px;font-size:12px;line-height:12px;color:#333;">安徽中久润滑油有限公...</div>
<div class="t " style="left:941px;top:490px;font-size:12px;line-height:12px;color:#333;">废矿物油</div>
<div class="t " style="left:1072px;top:490px;font-size:12px;line-height:12px;color:#333;letter-spacing:0.45px">HW08</div>
<div class="t " style="left:1175px;top:490px;font-size:12px;line-height:12px;color:#333;letter-spacing:0.45px">900-249-08</div>
<div class="t " style="left:1345px;top:490px;font-size:12px;line-height:12px;color:#333;letter-spacing:0.45px">7.69</div>
<div class="t " style="left:1499px;top:490px;font-size:12px;line-height:12px;color:#333;letter-spacing:0.45px">2019-06-06</div>
<div class="t " style="left:1673px;top:490px;font-size:12px;line-height:12px;color:#333;">已完成</div>
<div class="t " style="left:1779px;top:490px;font-size:12px;line-height:12px;color:#0d9fe6;">查看</div>
<div class="t " style="left:1811px;top:490px;font-size:12px;line-height:12px;color:#18bb95;">打印</div>
<div class="b" style="left:203px;top:543px;width:1717px;height:1px;background:#d0d0d0"></div>
<div class="cb" style="left:217px;top:521px"></div>
<div class="t " style="left:233px;top:524px;font-size:12px;line-height:12px;color:#333;letter-spacing:0.4px">10</div>
<div class="t " style="left:266px;top:522px;font-size:12px;line-height:12px;color:#333;letter-spacing:0.45px">201904771</div>
<div class="t " style="left:434px;top:522px;font-size:12px;line-height:12px;color:#333;letter-spacing:0.45px">34120801503</div>
<div class="t " style="left:631px;top:522px;font-size:12px;line-height:12px;color:#333;">安徽中久润滑油有限公...</div>
<div class="t " style="left:941px;top:522px;font-size:12px;line-height:12px;color:#333;">废矿物油</div>
<div class="t " style="left:1072px;top:522px;font-size:12px;line-height:12px;color:#333;letter-spacing:0.45px">HW08</div>
<div class="t " style="left:1175px;top:522px;font-size:12px;line-height:12px;color:#333;letter-spacing:0.45px">900-249-08</div>
<div class="t " style="left:1345px;top:522px;font-size:12px;line-height:12px;color:#333;letter-spacing:0.45px">7.85</div>
<div class="t " style="left:1499px;top:522px;font-size:12px;line-height:12px;color:#333;letter-spacing:0.45px">2019-05-21</div>
<div class="t " style="left:1673px;top:522px;font-size:12px;line-height:12px;color:#333;">已完成</div>
<div class="t " style="left:1779px;top:522px;font-size:12px;line-height:12px;color:#0d9fe6;">查看</div>
<div class="t " style="left:1811px;top:522px;font-size:12px;line-height:12px;color:#18bb95;">打印</div>
<div class="b" style="left:203px;top:575px;width:1717px;height:1px;background:#d0d0d0"></div>
<div class="cb" style="left:217px;top:553px"></div>
<div class="t " style="left:233px;top:556px;font-size:12px;line-height:12px;color:#333;letter-spacing:0.4px">11</div>
<div class="t " style="left:266px;top:554px;font-size:12px;line-height:12px;color:#333;letter-spacing:0.45px">201902322</div>
<div class="t " style="left:434px;top:554px;font-size:12px;line-height:12px;color:#333;letter-spacing:0.45px">34124906295</div>
<div class="t " style="left:631px;top:554px;font-size:12px;line-height:12px;color:#333;">安徽浩悦环境科技有限...</div>
<div class="t " style="left:941px;top:554px;font-size:12px;line-height:12px;color:#333;">废活性炭</div>
<div class="t " style="left:1072px;top:554px;font-size:12px;line-height:12px;color:#333;letter-spacing:0.45px">HW49</div>
<div class="t " style="left:1175px;top:554px;font-size:12px;line-height:12px;color:#333;letter-spacing:0.45px">900-039-49</div>
<div class="t " style="left:1345px;top:554px;font-size:12px;line-height:12px;color:#333;letter-spacing:0.45px">9.3</div>
<div class="t " style="left:1499px;top:554px;font-size:12px;line-height:12px;color:#333;letter-spacing:0.45px">2019-05-19</div>
<div class="t " style="left:1673px;top:554px;font-size:12px;line-height:12px;color:#333;">已完成</div>
<div class="t " style="left:1779px;top:554px;font-size:12px;line-height:12px;color:#0d9fe6;">查看</div>
<div class="t " style="left:1811px;top:554px;font-size:12px;line-height:12px;color:#18bb95;">打印</div>
<div class="b" style="left:203px;top:607px;width:1717px;height:1px;background:#d0d0d0"></div>
<div class="cb" style="left:217px;top:585px"></div>
<div class="t " style="left:233px;top:588px;font-size:12px;line-height:12px;color:#333;letter-spacing:0.4px">12</div>
<div class="t " style="left:266px;top:586px;font-size:12px;line-height:12px;color:#333;letter-spacing:0.45px">201902322</div>
<div class="t " style="left:434px;top:586px;font-size:12px;line-height:12px;color:#333;letter-spacing:0.45px">34124906128</div>
<div class="t " style="left:631px;top:586px;font-size:12px;line-height:12px;color:#333;">安徽浩悦环境科技有限...</div>
<div class="t " style="left:941px;top:586px;font-size:12px;line-height:12px;color:#333;">废活性炭</div>
<div class="t " style="left:1072px;top:586px;font-size:12px;line-height:12px;color:#333;letter-spacing:0.45px">HW49</div>
<div class="t " style="left:1175px;top:586px;font-size:12px;line-height:12px;color:#333;letter-spacing:0.45px">900-039-49</div>
<div class="t " style="left:1345px;top:586px;font-size:12px;line-height:12px;color:#333;letter-spacing:0.45px">7.82</div>
<div class="t " style="left:1499px;top:586px;font-size:12px;line-height:12px;color:#333;letter-spacing:0.45px">2019-05-15</div>
<div class="t " style="left:1673px;top:586px;font-size:12px;line-height:12px;color:#333;">已完成</div>
<div class="t " style="left:1779px;top:586px;font-size:12px;line-height:12px;color:#0d9fe6;">查看</div>
<div class="t " style="left:1811px;top:586px;font-size:12px;line-height:12px;color:#18bb95;">打印</div>
<div class="b" style="left:203px;top:639px;width:1717px;height:1px;background:#d0d0d0"></div>
<div class="cb" style="left:217px;top:617px"></div>
<div class="t " style="left:233px;top:620px;font-size:12px;line-height:12px;color:#333;letter-spacing:0.4px">13</div>
<div class="t " style="left:266px;top:618px;font-size:12px;line-height:12px;color:#333;letter-spacing:0.45px">201904771</div>
<div class="t " style="left:434px;top:618px;font-size:12px;line-height:12px;color:#333;letter-spacing:0.45px">34120801461</div>
<div class="t " style="left:631px;top:618px;font-size:12px;line-height:12px;color:#333;">安徽中久润滑油有限公...</div>
<div class="t " style="left:941px;top:618px;font-size:12px;line-height:12px;color:#333;">废矿物油</div>
<div class="t " style="left:1072px;top:618px;font-size:12px;line-height:12px;color:#333;letter-spacing:0.45px">HW08</div>
<div class="t " style="left:1175px;top:618px;font-size:12px;line-height:12px;color:#333;letter-spacing:0.45px">900-249-08</div>
<div class="t " style="left:1345px;top:618px;font-size:12px;line-height:12px;color:#333;letter-spacing:0.45px">7.66</div>
<div class="t " style="left:1499px;top:618px;font-size:12px;line-height:12px;color:#333;letter-spacing:0.45px">2019-05-14</div>
<div class="t " style="left:1673px;top:618px;font-size:12px;line-height:12px;color:#333;">已完成</div>
<div class="t " style="left:1779px;top:618px;font-size:12px;line-height:12px;color:#0d9fe6;">查看</div>
<div class="t " style="left:1811px;top:618px;font-size:12px;line-height:12px;color:#18bb95;">打印</div>
<div class="b" style="left:203px;top:671px;width:1717px;height:1px;background:#d0d0d0"></div>
<div class="cb" style="left:217px;top:649px"></div>
<div class="t " style="left:233px;top:652px;font-size:12px;line-height:12px;color:#333;letter-spacing:0.4px">14</div>
<div class="t " style="left:266px;top:650px;font-size:12px;line-height:12px;color:#333;letter-spacing:0.45px">201904771</div>
<div class="t " style="left:434px;top:650px;font-size:12px;line-height:12px;color:#333;letter-spacing:0.45px">34120801422</div>
<div class="t " style="left:631px;top:650px;font-size:12px;line-height:12px;color:#333;">安徽中久润滑油有限公...</div>
<div class="t " style="left:941px;top:650px;font-size:12px;line-height:12px;color:#333;">废矿物油</div>
<div class="t " style="left:1072px;top:650px;font-size:12px;line-height:12px;color:#333;letter-spacing:0.45px">HW08</div>
<div class="t " style="left:1175px;top:650px;font-size:12px;line-height:12px;color:#333;letter-spacing:0.45px">900-249-08</div>
<div class="t " style="left:1345px;top:650px;font-size:12px;line-height:12px;color:#333;letter-spacing:0.45px">7.88</div>
<div class="t " style="left:1499px;top:650px;font-size:12px;line-height:12px;color:#333;letter-spacing:0.45px">2019-04-25</div>
<div class="t " style="left:1673px;top:650px;font-size:12px;line-height:12px;color:#333;">已完成</div>
<div class="t " style="left:1779px;top:650px;font-size:12px;line-height:12px;color:#0d9fe6;">查看</div>
<div class="t " style="left:1811px;top:650px;font-size:12px;line-height:12px;color:#18bb95;">打印</div>
<div class="b" style="left:203px;top:703px;width:1717px;height:1px;background:#d0d0d0"></div>
<div class="cb" style="left:217px;top:681px"></div>
<div class="t " style="left:233px;top:684px;font-size:12px;line-height:12px;color:#333;letter-spacing:0.4px">15</div>
<div class="t " style="left:266px;top:682px;font-size:12px;line-height:12px;color:#333;letter-spacing:0.45px">201904771</div>
<div class="t " style="left:434px;top:682px;font-size:12px;line-height:12px;color:#333;letter-spacing:0.45px">34120801410</div>
<div class="t " style="left:631px;top:682px;font-size:12px;line-height:12px;color:#333;">安徽中久润滑油有限公...</div>
<div class="t " style="left:941px;top:682px;font-size:12px;line-height:12px;color:#333;">废矿物油</div>
<div class="t " style="left:1072px;top:682px;font-size:12px;line-height:12px;color:#333;letter-spacing:0.45px">HW08</div>
<div class="t " style="left:1175px;top:682px;font-size:12px;line-height:12px;color:#333;letter-spacing:0.45px">900-249-08</div>
<div class="t " style="left:1345px;top:682px;font-size:12px;line-height:12px;color:#333;letter-spacing:0.45px">7.75</div>
<div class="t " style="left:1499px;top:682px;font-size:12px;line-height:12px;color:#333;letter-spacing:0.45px">2019-04-20</div>
<div class="t " style="left:1673px;top:682px;font-size:12px;line-height:12px;color:#333;">已完成</div>
<div class="t " style="left:1779px;top:682px;font-size:12px;line-height:12px;color:#0d9fe6;">查看</div>
<div class="t " style="left:1811px;top:682px;font-size:12px;line-height:12px;color:#18bb95;">打印</div>
<div class="b" style="left:254px;top:224px;width:1px;height:480px;background:#d0d0d0"></div>
<div class="b" style="left:422px;top:224px;width:1px;height:480px;background:#d0d0d0"></div>
<div class="b" style="left:619px;top:224px;width:1px;height:480px;background:#d0d0d0"></div>
<div class="b" style="left:929px;top:224px;width:1px;height:480px;background:#d0d0d0"></div>
<div class="b" style="left:1064px;top:224px;width:1px;height:480px;background:#d0d0d0"></div>
<div class="b" style="left:1167px;top:224px;width:1px;height:480px;background:#d0d0d0"></div>
<div class="b" style="left:1333px;top:224px;width:1px;height:480px;background:#d0d0d0"></div>
<div class="b" style="left:1487px;top:224px;width:1px;height:480px;background:#d0d0d0"></div>
<div class="b" style="left:1661px;top:224px;width:1px;height:480px;background:#d0d0d0"></div>
<div class="b" style="left:1771px;top:224px;width:1px;height:480px;background:#d0d0d0"></div>
<div class="b" style="left:203px;top:704px;width:1717px;height:35px;background:#f2f2f2"></div>
<div class="b" style="left:203px;top:739px;width:1717px;height:1px;background:#d0d0d0"></div>
<div class="b" style="left:223px;top:714px;width:32px;height:18px;background:#fff;border:1px solid #cfcfcf;box-sizing:border-box"></div>
<div class="t" style="left:223px;width:32px;text-align:center;top:716px;font-size:12px;line-height:12px;color:#888;">首页</div>
<div class="b" style="left:260px;top:714px;width:44px;height:18px;background:#fff;border:1px solid #cfcfcf;box-sizing:border-box"></div>
<div class="t" style="left:260px;width:44px;text-align:center;top:716px;font-size:12px;line-height:12px;color:#888;">上一页</div>
<div class="b" style="left:309px;top:714px;width:18px;height:18px;background:#fde9e2;border:1px solid #ff5a10;box-sizing:border-box"></div>
<div class="t" style="left:309px;width:18px;text-align:center;top:717px;font-size:12px;line-height:12px;color:#f05000;font-weight:bold">1</div>
<div class="b" style="left:332px;top:714px;width:18px;height:18px;background:#fff;border:1px solid #cfcfcf;box-sizing:border-box"></div>
<div class="t" style="left:332px;width:18px;text-align:center;top:717px;font-size:12px;line-height:12px;color:#1a5ce0;">2</div>
<div class="b" style="left:355px;top:714px;width:18px;height:18px;background:#fff;border:1px solid #cfcfcf;box-sizing:border-box"></div>
<div class="t" style="left:355px;width:18px;text-align:center;top:717px;font-size:12px;line-height:12px;color:#1a5ce0;">3</div>
<div class="b" style="left:378px;top:714px;width:18px;height:18px;background:#fff;border:1px solid #cfcfcf;box-sizing:border-box"></div>
<div class="t" style="left:378px;width:18px;text-align:center;top:717px;font-size:12px;line-height:12px;color:#1a5ce0;">4</div>
<div class="b" style="left:401px;top:714px;width:18px;height:18px;background:#fff;border:1px solid #cfcfcf;box-sizing:border-box"></div>
<div class="t" style="left:401px;width:18px;text-align:center;top:717px;font-size:12px;line-height:12px;color:#1a5ce0;">5</div>
<div class="b" style="left:424px;top:714px;width:18px;height:18px;background:#fff;border:1px solid #cfcfcf;box-sizing:border-box"></div>
<div class="t" style="left:424px;width:18px;text-align:center;top:717px;font-size:12px;line-height:12px;color:#1a5ce0;">6</div>
<div class="b" style="left:447px;top:714px;width:44px;height:18px;background:#fff;border:1px solid #cfcfcf;box-sizing:border-box"></div>
<div class="t" style="left:447px;width:44px;text-align:center;top:716px;font-size:12px;line-height:12px;color:#1a5ce0;">下一页</div>
<div class="b" style="left:496px;top:714px;width:32px;height:18px;background:#fff;border:1px solid #cfcfcf;box-sizing:border-box"></div>
<div class="t" style="left:496px;width:32px;text-align:center;top:716px;font-size:12px;line-height:12px;color:#1a5ce0;">尾页</div>
<div class="t" style="left:1700px;width:1201px;text-align:right;top:715px;font-size:12px;line-height:12px;color:#333;left:700px">共<span style="color:#f21">6</span>页 <span style="color:#f21">81</span>条记录</div>
</body></html>
